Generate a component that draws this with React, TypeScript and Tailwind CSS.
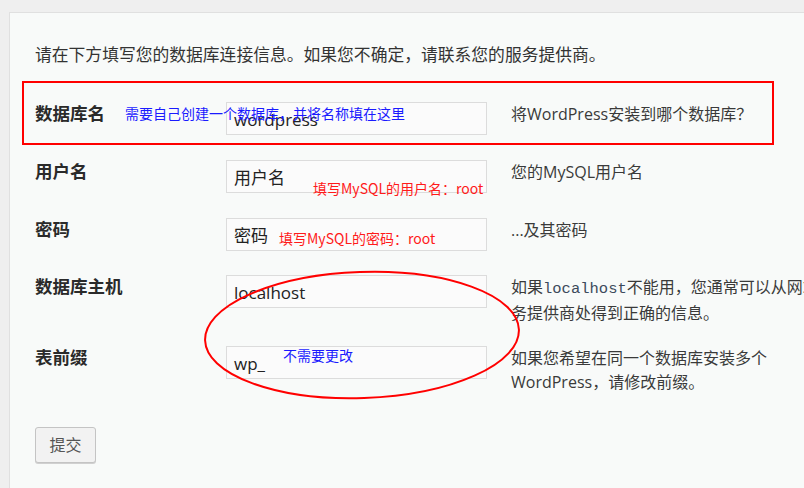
export default function App() {
  const sans = "font-['Open_Sans','Noto_Sans_CJK_SC',sans-serif]";

  const rows = [
    { label: "数据库名", value: "wordpress", h: "h-[58px]", desc: <>将WordPress安装到哪个数据库？</> },
    { label: "用户名", value: "用户名", h: "h-[58px]", desc: <>您的MySQL用户名</> },
    { label: "密码", value: "密码", h: "h-[57px]", desc: <>...及其密码</> },
    {
      label: "数据库主机",
      value: "localhost",
      h: "h-[71px]",
      desc: (
        <>
          如果<code className="font-['Liberation_Mono','DejaVu_Sans_Mono',monospace] text-[15.5px] text-[#3c4a5c]">localhost</code>
          不能用，您通常可以从网站服
          <br />
          务提供商处得到正确的信息。
        </>
      ),
    },
    {
      label: "表前缀",
      value: "wp_",
      h: "h-[81px]",
      desc: (
        <>
          如果您希望在同一个数据库安装多个
          <br />
          WordPress，请修改前缀。
        </>
      ),
    },
  ];

  return (
    <div className={`relative w-[804px] h-[488px] overflow-hidden bg-[#efefef] pt-[12px] pl-[9px] ${sans}`}>
      <div className="h-full border-l border-t border-[#e0e0e0] bg-[#f8faf9] pl-[25px] pt-[30px] text-[#333]">
        <p className="text-[16.8px] leading-[24px] whitespace-nowrap">
          请在下方填写您的数据库连接信息。如果您不确定，请联系您的服务提供商。
        </p>

        <div className="mt-[35px] flex flex-col">
          {rows.map((r) => (
            <div key={r.label} className={`flex items-start ${r.h}`}>
              <div className="w-[191px] shrink-0 text-[17.5px] font-bold leading-[22px] text-[#2a2a2a]">{r.label}</div>
              <div className="w-[261px] h-[33px] shrink-0 border border-[#dcdcdc] bg-[#fbfbfb] pl-[7px] pt-[1px] text-[17px] leading-[31px] text-[#222]">
                {r.value}
              </div>
              <div className="ml-[24px] whitespace-nowrap text-[16px] leading-[24px] text-[#3a3a3a]">{r.desc}</div>
            </div>
          ))}
        </div>

        <button className="w-[61px] h-[36px] rounded-[3px] border border-[#c4c4c4] bg-[#f2f2f2] text-[16px] text-[#555] shadow-[0_1px_0_#d0d0d0]">
          提交
        </button>
      </div>

      {/* annotations drawn over the form */}
      <div className="absolute left-[22px] top-[81px] w-[752px] h-[64px] border-2 border-[#ff0000]" />
      <span className="absolute left-[125px] top-[104px] text-[14px] leading-[18px] text-[#1a1aff] font-['Noto_Sans_CJK_SC',sans-serif]">
        需要自己创建一个数据库，并将名称填在这里
      </span>
      <span className="absolute left-[313px] top-[179px] text-[14px] leading-[18px] text-[#ff1a1a] font-['Noto_Sans_CJK_SC',sans-serif]">
        填写MySQL的用户名：root
      </span>
      <span className="absolute left-[279px] top-[229px] text-[14px] leading-[18px] text-[#ff1a1a] font-['Noto_Sans_CJK_SC',sans-serif]">
        填写MySQL的密码：root
      </span>
      <span className="absolute left-[283px] top-[346px] text-[14px] leading-[18px] text-[#1a1aff] font-['Noto_Sans_CJK_SC',sans-serif]">
        不需要更改
      </span>
      <svg className="absolute left-0 top-0 pointer-events-none" width="804" height="488">
        <ellipse cx="362" cy="335" rx="157" ry="63" fill="none" stroke="#ff0000" strokeWidth="2" transform="rotate(-2 362 335)" />
      </svg>
    </div>
  );
}
